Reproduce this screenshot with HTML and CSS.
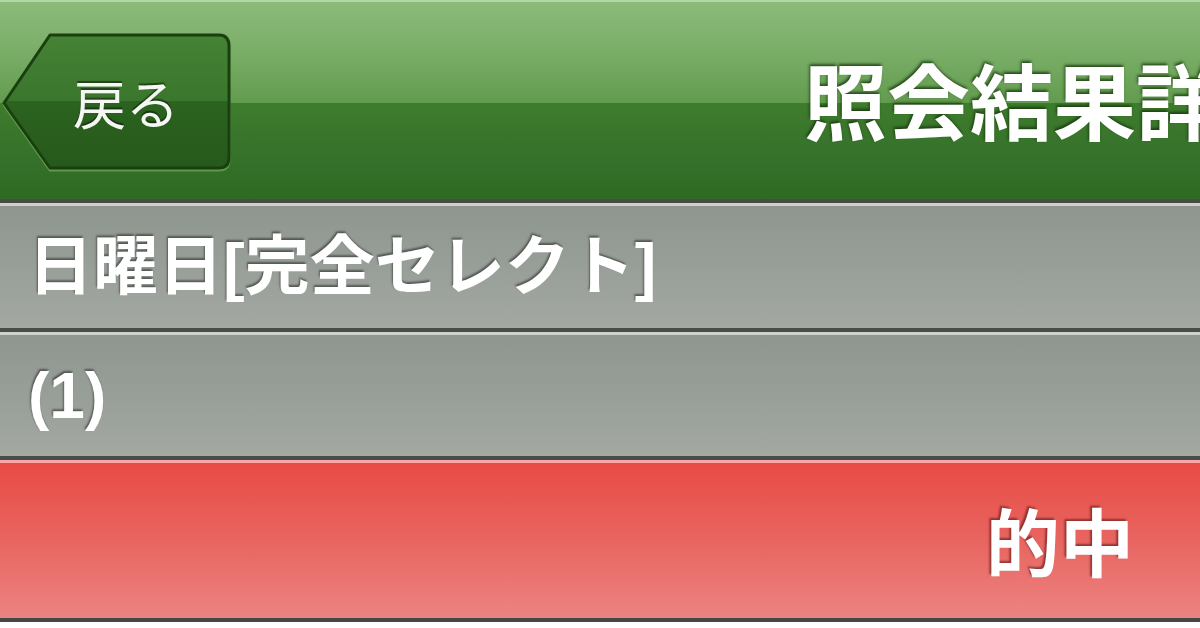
FILE: index.html
```html
<!DOCTYPE html>
<html lang="ja">
<head>
<meta charset="utf-8">
<link rel="stylesheet" href="styles.css">
</head>
<body>
<div class="page">
  <header class="header">
    <div class="back">
      <svg class="back-shape" viewBox="0 0 232 140" width="232" height="140">
        <defs>
          <linearGradient id="bg" x1="0" y1="0" x2="0" y2="1">
            <stop offset="0" stop-color="#468236"/>
            <stop offset="0.5" stop-color="#3a762b"/>
            <stop offset="0.5" stop-color="#2c6320"/>
            <stop offset="1" stop-color="#26591b"/>
          </linearGradient>
        </defs>
        <path d="M4 71 L50 3 H219 Q229 3 229 14 V125 Q229 136 219 136 H50 Z" fill="none" stroke="#5f9a4c" stroke-width="3" stroke-linejoin="round" transform="translate(0 2)"/>
        <path d="M4 71 L50 3 H219 Q229 3 229 14 V125 Q229 136 219 136 H50 Z" fill="url(#bg)" stroke="#1b4010" stroke-width="3" stroke-linejoin="round"/>
      </svg>
      <span class="back-label">戻る</span>
    </div>
    <h1 class="title">照会結果詳細</h1>
  </header>
  <div class="row row-gray row-first">
    <span class="row-text">日曜日[完全セレクト]</span>
  </div>
  <div class="row row-gray">
    <span class="row-text">(1)</span>
  </div>
  <div class="row row-red">
    <span class="hit">的中</span>
  </div>
</div>
</body>
</html>
```

FILE: styles.css
```css
html, body {
  margin: 0;
  padding: 0;
  background: #ffffff;
}

.page {
  width: 1200px;
  height: 628px;
  overflow: hidden;
  font-family: "Liberation Sans", "Noto Sans CJK JP", sans-serif;
  color: #ffffff;
}

.header {
  height: 197px;
  border-top: 2px solid #b4d6a5;
  border-bottom: 4px solid #484a46;
  background: linear-gradient(to bottom, #8cba7b 0%, #7aae68 25%, #629c4e 51%, #3e7c2d 51.5%, #35712a 80%, #2f6a22 100%);
  display: flex;
  align-items: center;
  overflow: hidden;
}

.back {
  position: relative;
  flex: 0 0 auto;
  width: 232px;
  height: 140px;
  margin-left: 0;
  margin-top: 2px;
  display: flex;
  align-items: center;
  justify-content: center;
  padding-left: 20px;
  box-sizing: border-box;
}

.back-shape {
  position: absolute;
  left: 0;
  top: 0;
}

.back-label {
  position: relative;
  font-family: "Noto Sans CJK JP", sans-serif;
  font-size: 53px;
  font-weight: 400;
  line-height: 1;
  color: #f4f7f2;
  text-shadow: 0 -2px 1px rgba(0, 0, 0, 0.45);
  margin-top: 2px;
}

.title {
  flex: 0 0 auto;
  margin: -4px 0 0 572px;
  font-family: "Noto Sans CJK JP", sans-serif;
  font-size: 83px;
  font-weight: 700;
  line-height: 1;
  white-space: nowrap;
  color: #ffffff;
  text-shadow: -1px -2px 3px rgba(20, 50, 10, 0.8);
}

.row {
  display: flex;
  align-items: center;
  box-sizing: border-box;
}

.row-gray {
  height: 128px;
  border-top: 3px solid #ced1cd;
  border-bottom: 4px solid #4a4c49;
  background: linear-gradient(to bottom, #8f958f 0%, #989e98 50%, #a3a8a2 100%);
  padding-left: 28px;
}

.row-first {
  height: 129px;
}

.row-text {
  font-size: 64px;
  font-weight: 700;
  line-height: 1;
  white-space: nowrap;
  text-shadow: -1px -2px 2px rgba(40, 44, 40, 0.6);
}

.row-first .row-text {
  font-size: 65px;
  margin-left: 0;
  margin-top: -2px;
}

.row-red {
  height: 162px;
  border-top: 3px solid #f7a7a7;
  border-bottom: 4px solid #474747;
  background: linear-gradient(to bottom, #e84b46 0%, #e86560 50%, #ec8381 100%);
  justify-content: flex-end;
  padding-right: 66px;
}

.hit {
  font-family: "Noto Sans CJK JP", sans-serif;
  font-size: 74px;
  font-weight: 700;
  line-height: 1;
  margin-top: -3px;
  text-shadow: -2px -2px 2px rgba(90, 20, 20, 0.6);
}
```
